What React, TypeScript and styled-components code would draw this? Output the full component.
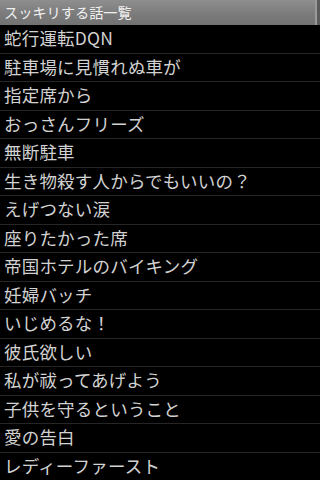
import React from "react";
import styled, { createGlobalStyle } from "styled-components";

const Global = createGlobalStyle`
  html, body { margin: 0; padding: 0; background: #000; }
  body { width: 320px; height: 480px; overflow: hidden; }
`;

const Screen = styled.div`
  width: 320px;
  height: 480px;
  background: #000;
  display: flex;
  flex-direction: column;
  overflow: hidden;
  font-family: "Noto Sans CJK JP", "DejaVu Sans", sans-serif;
`;

const TitleBar = styled.div`
  height: 25px;
  flex: 0 0 25px;
  box-sizing: border-box;
  display: flex;
  align-items: center;
  padding: 0 0 1px 4px;
  background: linear-gradient(#8e8e8e, #7a7a7a 60%, #727272);
  border-right: 3px solid #5a5a5a;
  box-shadow: inset -4px 0 0 -2px #9a9a9a;
  color: #f0f0f0;
  font-size: 14.2px;
  line-height: 1;
`;

const List = styled.ul`
  list-style: none;
  margin: 0;
  padding: 0;
  display: flex;
  flex-direction: column;
`;

const Row = styled.li`
  height: 28.5px;
  flex: 0 0 28.5px;
  box-sizing: border-box;
  display: flex;
  align-items: center;
  padding: 0 0 2px 4px;
  border-bottom: 1px solid #262626;
  color: #d2d2d2;
  font-size: 17.5px;
  line-height: 1;
  white-space: nowrap;
  letter-spacing: 0.2px;
`;

const items = [
  "蛇行運転DQN",
  "駐車場に見慣れぬ車が",
  "指定席から",
  "おっさんフリーズ",
  "無断駐車",
  "生き物殺す人からでもいいの？",
  "えげつない涙",
  "座りたかった席",
  "帝国ホテルのバイキング",
  "妊婦バッチ",
  "いじめるな！",
  "彼氏欲しい",
  "私が祓ってあげよう",
  "子供を守るということ",
  "愛の告白",
  "レディーファースト",
];

export default function App() {
  return (
    <Screen>
      <Global />
      <TitleBar>スッキリする話一覧</TitleBar>
      <List>
        {items.map((t) => (
          <Row key={t}>{t}</Row>
        ))}
      </List>
    </Screen>
  );
}
